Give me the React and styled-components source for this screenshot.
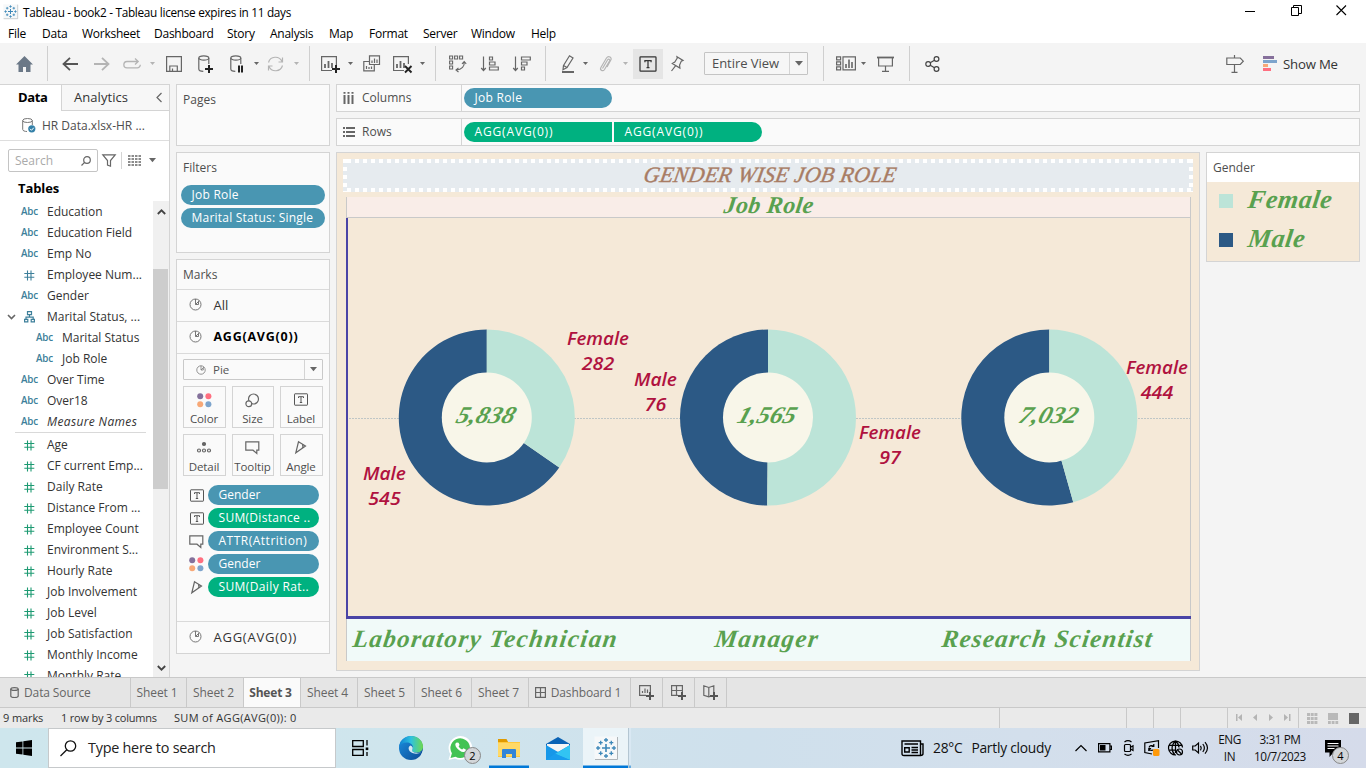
import React from "react";
import styled, { createGlobalStyle, css } from "styled-components";

const C = {
  blue: "#4996b2", green: "#00b180", line: "#d4d4d4", ink: "#333", grey: "#666",
  dim: "#4e4e4e", canvas: "#f5e9d8", script: "#59a14f", navy: "#2c5985", mint: "#bce4d8",
};
const ui = `"Open Sans", "Noto Sans", sans-serif`;
const script = `"Liberation Serif", serif`;

const Global = createGlobalStyle`
  * { box-sizing: border-box; }
  html, body { margin: 0; padding: 0; overflow: hidden; }
  body { width: 1366px; height: 768px; font: 12px/16px ${ui}; color: ${C.ink}; background: #fff; }
  svg { display: block; flex: none; overflow: visible; }
`;

const Window = styled.div`width: 1366px; height: 768px; display: flex; flex-direction: column; overflow: hidden; white-space: nowrap;`;
const TitleBar = styled.header`height: 22px; display: flex; align-items: center; padding: 1px 19px 0 3px; background: #fff; color: #000; letter-spacing: -0.3px;`;
const TitleText = styled.span`margin-left: 5px; flex: 1; font-size: 11.8px;`;
const WindowButtons = styled.div`display: flex; gap: 34.5px; padding-bottom: 3px;`;
const MenuBar = styled.nav`height: 21px; display: flex; align-items: center; padding: 2px 0 0 8px; background: #fff; color: #000; font-size: 12px;`;
const MenuItem = styled.span`width: ${p => p.$w}px; letter-spacing: -0.25px;`;

const Toolbar = styled.div`height: 41px; display: flex; align-items: center; background: #f4f4f4;`;
const Tool = styled.div`width: ${p => p.$w}px; margin-left: ${p => p.$gap || 0}px; display: flex; justify-content: center; flex: none;`;
const Sep = styled.div`width: 1px; height: 35px; background: #cfcfcf; margin-left: ${p => p.$gap}px; flex: none;`;
const Pressed = styled(Tool)`height: 30px; align-items: center; background: #e5e5e5;`;
const FitSelect = styled.div`width: 104px; height: 23px; margin-left: 20px; display: flex; border: 1px solid #c4c4c4; border-radius: 1px; font-size: 13px; line-height: 21px; color: ${C.dim}; padding-left: 7px; letter-spacing: -0.05px; background: #f6f6f6;`;
const SelectArrow = styled.div`margin-left: auto; width: ${p => p.$w}px; border-left: 1px solid ${C.line}; display: flex; align-items: center; justify-content: center;`;
const ShowMe = styled.span`margin-left: 6px; font: 13.2px ${ui}; color: #333; letter-spacing: -0.2px;`;

const Workspace = styled.main`height: 593px; display: flex; background: #f4f4f4;`;
const Sidebar = styled.aside`width: 170px; border-right: 1px solid ${C.line}; border-top: 1px solid ${C.line}; background: #fff; display: flex; flex-direction: column;`;
const SideTabs = styled.div`display: flex; height: 26px;`;
const DataTab = styled.div`width: 61px; font-weight: 700; font-size: 13px; line-height: 25px; color: #000; padding-left: 18px; letter-spacing: -0.35px;`;
const AnalyticsTab = styled.div`flex: 1; border-left: 1px solid ${C.line}; border-bottom: 1px solid ${C.line}; background: #f7f7f7; display: flex; align-items: center; justify-content: space-between; padding: 0 7px 1px 12px; font-size: 13px; letter-spacing: 0.05px;`;
const SourceRow = styled.div`height: 30px; display: flex; align-items: center; padding-left: 22px; gap: 6px; border-bottom: 1px solid #dedede; color: ${C.dim};`;
const SearchRow = styled.div`height: 39px; padding: 8px 12px 8px 8px; display: flex; align-items: center;`;
const SearchBox = styled.div`width: 90px; height: 23px; border: 1px solid #c4c4c4; border-radius: 2px; display: flex; align-items: center; justify-content: space-between; padding: 0 6px; color: #aaa;`;
const SmallRule = styled.div`width: 1px; height: 17px; background: ${C.line}; margin: 0 6px 0 5px;`;
const TablesHeading = styled.h2`margin: 0; height: 21px; padding-left: 18px; font-size: 13px; line-height: 16px; font-weight: 700; color: #000; letter-spacing: -0.1px;`;
const FieldArea = styled.div`height: 476px; display: flex; overflow: hidden;`;
const Fields = styled.div`width: 153px; height: 476px; overflow: hidden;`;
const Field = styled.div`height: 21px; display: flex; align-items: center; color: ${C.ink}; font-style: ${p => p.$italic ? "italic" : "normal"}; padding-left: ${p => p.$child ? 15 : 0}px; letter-spacing: ${p => p.$italic ? 0.36 : 0}px;`;
const Arrow = styled.span`width: 20px; padding-left: 7px; flex: none;`;
const TypeIcon = styled.span`width: 27px; flex: none; font: normal 600 9.8px/12px ${ui}; color: #3d7f9a; letter-spacing: -0.2px; padding-left: ${p => p.$pad || 0}px; padding-top: 1px;`;
const FieldRule = styled.div`height: 1px; margin: 0 7px 1px 15px; background: #d9d9d9;`;
const Scroll = styled.div`width: 16px; background: #f0f0f0; display: flex; flex-direction: column; align-items: center; justify-content: space-between; padding: 8px 0 6px; position: relative;`;
const Thumb = styled.div`position: absolute; top: 68px; left: 0; width: 15px; height: 220px; background: #cdcdcd;`;

const CardColumn = styled.div`width: 154px; margin-left: 6px; display: flex; flex-direction: column; gap: 6px;`;
const Card = styled.section`height: ${p => p.$h}px; border: 1px solid ${C.line}; background: #fafafa; display: flex; flex-direction: column; flex: none;`;
const CardTitle = styled.div`height: ${p => p.$h || 30}px; padding: 7px 0 0 6px; color: ${C.dim}; flex: none;`;
const pill = css`height: 20px; color: #fff; line-height: 19px; padding-left: 11px; background: ${p => p.$green ? C.green : C.blue}; overflow: hidden; flex: none; letter-spacing: ${p => p.$ls || 0}px;`;
const FilterPill = styled.div`${pill} margin: 2px 4px 1px; border-radius: 10px; padding-left: 10.5px;`;
const MarkLayer = styled.div`height: 32px; border-top: 1px solid #dadada; display: flex; align-items: center; padding: 0 0 2px 12px; gap: 11.5px; flex: none; font-size: ${p => p.$bold ? 12.5 : 13}px; font-weight: ${p => p.$bold ? 700 : 400}; color: ${p => p.$bold ? "#000" : C.ink}; letter-spacing: ${p => p.$ls || 0}px;`;
const MarkBody = styled.div`border-top: 1px solid #dadada; padding: 5px 6px; height: 268px; flex: none;`;
const MarkSelect = styled.div`height: 21px; border: 1px solid #c9c9c9; border-radius: 1px; display: flex; align-items: center; padding-left: 12px; gap: 7px; font-size: 11.5px; color: #555; ${SelectArrow} { height: 19px; }`;
const MarkGrid = styled.div`display: grid; grid-template-columns: 43px 42px 43px; column-gap: 6px; row-gap: 6px; margin-top: 6px;`;
const MarkButton = styled.div`height: 42px; border: 1px solid ${C.line}; display: flex; flex-direction: column; align-items: center; justify-content: space-between; padding: 6px 1px 0 0; font-size: 11.5px; line-height: 16px; color: ${C.dim}; letter-spacing: -0.1px;`;
const MarkPills = styled.div`margin-top: 9px; display: flex; flex-direction: column; gap: 3px;`;
const MarkPillRow = styled.div`display: flex; align-items: center; height: 20px;`;
const MarkGlyph = styled.div`width: 26px; display: flex; justify-content: center; padding-left: 1px; margin-right: -1px;`;
const MarkPill = styled.div`${pill} width: 111px; border-radius: 10px; padding-left: 10.5px;`;

const Content = styled.div`width: 1024px; margin-left: 6px; display: flex; flex-direction: column;`;
const Shelf = styled.div`height: 28px; margin-bottom: 6px; border: 1px solid ${C.line}; background: #fafafa; display: flex; align-items: center; color: ${C.dim}; flex: none;`;
const ShelfName = styled.div`width: 125px; height: 26px; border-right: 1px solid ${C.line}; display: flex; align-items: center; padding-left: 6px; gap: 7px; margin-right: 2px;`;
const ShelfPill = styled.div`${pill} width: 148px; margin-right: 2px; border-radius: ${p => p.$radius || "10px"}; padding-left: 10.5px;`;
const Lower = styled.div`display: flex; gap: 6px;`;
const Viz = styled.section`width: 864px; height: 519px; border: 1px solid ${C.line}; background: ${C.canvas}; padding: 6px 6px 0; flex: none;`;
const VizTitle = styled.div`
  height: 33px; margin-bottom: 5px; padding: 4px 3px 0 8px; width: 850px;
  background: repeating-linear-gradient(90deg, transparent 0 4px, #fff 4px 8px) 0 0 / 100% 4px no-repeat,
    repeating-linear-gradient(90deg, transparent 0 4px, #fff 4px 8px) 0 100% / 100% 4px no-repeat,
    repeating-linear-gradient(180deg, #fff 0 4px, transparent 4px 8px) 0 0 / 4px 100% no-repeat,
    repeating-linear-gradient(180deg, #fff 0 4px, transparent 4px 8px) 100% 0 / 4px 100% no-repeat, #e6ebef;
  text-align: center; font: italic 400 22px/24px ${script}; color: #a87c64; letter-spacing: 0.25px; -webkit-text-stroke: 0.4px #a87c64;
`;
const VizTitleText = styled.span`display: inline-block; transform: skewX(-10deg);`;
const Sheet = styled.div`margin-left: 3px; width: 845px; height: 464px; border-right: 1px solid #c9c9c9;`;
const ColumnHeader = styled.div`height: 21px; background: #f9ede8; border-left: 1px solid #c9c9c9; border-bottom: 1px solid #c9c9c9; text-align: center; font: italic 700 24px/16px ${script}; color: ${C.script}; overflow: hidden; letter-spacing: 0.3px;`;
const Plot = styled.div`height: 401px; border-left: 2px solid #4a44a6; border-bottom: 3px solid #4a44a6; margin-right: -1px;`;
const Axis = styled.div`height: 42px; background: #f1faf9; border-left: 1px solid #c9c9c9; display: grid; grid-template-columns: 278px 284px 278px; padding-top: 2px;`;
const Script = styled.span`display: inline-block; transform: skewX(-8deg);`;
const AxisLabel = styled.div`text-align: center; font: italic 700 25px/36px ${script}; color: ${C.script}; letter-spacing: ${p => p.$ls}px;`;
const Legend = styled.section`width: 154px; height: 110px; border: 1px solid ${C.line}; background: ${C.canvas};`;
const LegendTitle = styled.div`height: 29px; background: #fff; padding: 7px 6px; color: ${C.dim};`;
const LegendRow = styled.div`height: 39px; display: flex; align-items: center; padding: 0 0 2px 12px; gap: 15px; font: italic 700 26px/30px ${script}; color: ${C.script}; letter-spacing: 0.6px;`;
const Swatch = styled.i`width: 14px; height: 14px; background: ${p => p.$c};`;
const LegendText = styled(Script)`padding-bottom: 2px;`;

const SheetTabs = styled.div`height: 31px; display: flex; border-top: 1px solid #c9c9c9; border-bottom: 1px solid #c9c9c9; background: #e5e5e5; color: ${C.grey}; flex: none;`;
const SheetTab = styled.div`width: ${p => p.$w}px; display: flex; align-items: center; justify-content: ${p => p.$left ? "flex-start" : "center"}; gap: 5px; padding-left: ${p => p.$left || 0}px; padding-right: ${p => p.$left ? 0 : 3}px; border-right: 1px solid #c9c9c9; background: ${p => p.$active ? "#fafafa" : "transparent"}; font-weight: ${p => p.$active ? 700 : 400}; color: ${p => p.$active ? "#555" : C.grey}; letter-spacing: ${p => p.$active ? -0.2 : -0.12}px;`;
const IconTab = styled(SheetTab)`padding: 0;`;
const StatusBar = styled.div`height: 20px; display: flex; background: #eaeaea; font-size: 11px; line-height: 20px; padding-left: 3px; color: ${C.ink}; flex: none;`;
const StatusText = styled.span`width: ${p => p.$w}px; letter-spacing: ${p => p.$ls || 0}px; flex: none;`;
const StatusCell = styled.div`width: ${p => p.$w}px; border-left: 1px solid #c9c9c9; display: flex; align-items: center; padding-left: ${p => p.$pad || 0}px; gap: ${p => p.$gap || 0}px; flex: none;`;

const Taskbar = styled.footer`height: 40px; display: flex; align-items: center; background: linear-gradient(90deg, #cee6ed 0%, #cfe5ed 30%, #cfe0ec 55%, #d3dfec 75%, #d5dbea 100%); color: #111; flex: none;`;
const StartButton = styled.div`width: 48px; display: flex; justify-content: center;`;
const TaskSearch = styled.div`width: 288px; height: 40px; background: #fff; border: 1px solid #c6c9cb; display: flex; align-items: center; gap: 11px; padding-left: 11px; font-size: 14.4px; letter-spacing: -0.25px; color: #222;`;
const TaskItem = styled.div`width: ${p => p.$w}px; height: 40px; margin-left: ${p => p.$gap || 0}px; display: flex; align-items: center; justify-content: center; position: relative; background: ${p => p.$active ? "#ebf4f8" : "transparent"}; box-shadow: ${p => p.$open ? "inset 0 -2.5px 0 #0078d7" : "none"}; flex: none;`;
const StackEdge = styled.div`width: 3px; height: 40px; background: #d9e8f3; border-left: 1px solid #b4c6d2; box-shadow: inset 0 -2.5px 0 #63a9e0; flex: none;`;
const Badge = styled.span`position: absolute; left: ${p => p.$x}px; top: 19px; width: 17px; height: 17px; border-radius: 50%; border: 1px solid #888; background: #d3d6d9; font-size: 11px; line-height: 15px; text-align: center; color: #000;`;
const Weather = styled.div`display: flex; align-items: center; margin-left: 270px; width: 174px; font-size: 13.8px; letter-spacing: -0.25px; gap: 9px; flex: none;`;
const Clock = styled.div`width: ${p => p.$w}px; text-align: center; font-size: 11.8px; line-height: 17px; letter-spacing: -0.45px; flex: none;`;

const S = ({ w = 18, h = 18, c = "#666", sw = 1.2, children, vb }) => (
  <svg width={w} height={h} viewBox={vb || `0 0 ${w} ${h}`} fill="none" stroke={c} strokeWidth={sw}>{children}</svg>
);
const Caret = ({ c = "#666", w = 5 }) => <svg width={w} height={w * 0.6} viewBox="0 0 10 6"><path d="M0 0h10L5 6z" fill={c} /></svg>;
const Pie = ({ s = 13 }) => <S w={s} h={s} vb="0 0 13 13" c="#777" sw={1}><circle cx="6.5" cy="6.5" r="5.5" /><path d="M6.5 6.5V1M6.5 6.5l3.800-3.800M6.500 6.500h3V3.500" /></S>;
const TBox = ({ w = 14, h = 13, c = "#555" }) => <S w={w} h={h} vb="0 0 14 13" c={c} sw={1}><rect x=".5" y=".8" width="13" height="11.4" rx=".5" /><path d="M4.500 5V3.700h5V5M7 3.700v5.800M5.800 9.500h2.400" /></S>;
const Dots = () => <svg width="15" height="15"><circle cx="3.2" cy="3.2" r="3" fill="#84719b" /><circle cx="11.4" cy="3.2" r="3" fill="#ff6f80" /><circle cx="3.2" cy="11.2" r="3" fill="#f7a877" /><circle cx="11.4" cy="11.2" r="3" fill="#7da4cc" /></svg>;
const Bubble = () => <S w={15} h={13}><path d="M.8.8h13v8.400h-2v3.300L8 9.200H.8z" /></S>;
const Angle = () => <S w={12} h={13}><path d="M3.500.8l7 4.200-9.700 6.800zM7.500 3.400c.8 1.800.6 3.200-.8 4.300" /></S>;
const Hash = ({ c = "#1d9a72" }) => <S w={11} h={11} c={c} sw={1.1}><path d="M3.500.5v10M7 .5v10M.3 3.500h10M.3 7.200h10" /></S>;
const Tree = () => <S w={11} h={12} c="#3d7f9a"><path d="M3.500.6h4v3h-4zM5.500 3.600v2.600M2 8.300V6.200h7.200v2.100M.6 8.300h3.200v2.600H.6zM7.200 8.300h3.200v2.600H7.200z" /></S>;
const Cyl = ({ children, w = 16 }) => <S w={w} h={18}><ellipse cx="5.800" cy="3" rx="5" ry="2.200" /><path d="M.8 3v11c0 1.500 2 2.300 4.500 2.300M10.800 3v6" />{children}</S>;
const Plus = ({ x, y, c = "#222" }) => <path d={`M${x} ${y - 4}v8M${x - 4} ${y}h8`} stroke={c} strokeWidth="2" />;
const Bars = ({ x = 0, y = 0 }) => <path d={`M${x} ${y}v-4M${x + 3.5} ${y}v-7M${x + 7} ${y}v-5`} strokeWidth="1.8" />;
const TableauMark = ({ s = 24 }) => (
  <svg width={s} height={s} viewBox="0 0 24 24">
    <rect x=".5" y=".5" width="23" height="23" fill="#f6f8f9" />
    <path d="M23.500 1v22.500H1" stroke="#aeb4b8" fill="none" />
    <g stroke="#3c87b8" strokeWidth="1.3" fill="none">
      <path d="M12 8v8M8 12h8" strokeWidth="1.6" /><path d="M12 2v4M10 4h4M12 18v4M10 20h4M4 10v4M2.200 12h4M20 10v4M17.800 12h4" />
      <path d="M6.700 4.700v4M4.700 6.700h4M17.300 4.700v4M15.300 6.700h4M6.700 15.300v4M4.700 17.300h4M17.300 15.300v4M15.300 17.300h4" />
    </g>
  </svg>
);

const menus = [["File", 34], ["Data", 40], ["Worksheet", 72], ["Dashboard", 73], ["Story", 43], ["Analysis", 59], ["Map", 40], ["Format", 54], ["Server", 48], ["Window", 60], ["Help", 40]];
const dimensions = [["Education", "abc"], ["Education Field", "abc"], ["Emp No", "abc"], ["Employee Num...", "num"], ["Gender", "abc"], ["Marital Status, ...", "tree"], ["Marital Status", "abc", true], ["Job Role", "abc", true], ["Over Time", "abc"], ["Over18", "abc"], ["Measure Names", "abc", false, true]];
const measures = ["Age", "CF current Emp...", "Daily Rate", "Distance From ...", "Employee Count", "Environment S...", "Hourly Rate", "Job Involvement", "Job Level", "Job Satisfaction", "Monthly Income", "Monthly Rate"];

const FieldRow = ({ name, type, child, italic }) => (
  <Field $child={child} $italic={italic}>
    <Arrow>{type === "tree" && <S w={9} h={6} sw={1.6}><path d="M1 1l3.500 3.500L8 1" /></S>}</Arrow>
    <TypeIcon $pad={type === "abc" ? 1 : 3.5}>{type === "abc" ? "Abc" : type === "tree" ? <Tree /> : <Hash c={type === "num" ? "#3d7f9a" : undefined} />}</TypeIcon>
    {name}
  </Field>
);

const pies = [
  { cx: 138.8, deg: 124.6, total: "5,838", labels: [["Female", "282", 250, 127], ["Male", "545", 36.5, 262]] },
  { cx: 420, deg: 180.5, total: "1,565", labels: [["Male", "76", 307.5, 168], ["Female", "97", 542, 221]] },
  { cx: 701.3, deg: 164.2, total: "7,032", labels: [["Female", "444", 809, 156]] },
];
const widths = { Female: 62, Male: 43 };
const Donut = ({ cx, deg, total, labels }) => {
  const cy = 199.5, r = 88, a = (deg * Math.PI) / 180;
  const x = cx + r * Math.sin(a), y = cy - r * Math.cos(a), large = deg > 180 ? 1 : 0;
  return (
    <g>
      <path d={`M${cx} ${cy}V${cy - r}A${r} ${r} 0 ${1 - large} 0 ${x} ${y}Z`} fill={C.navy} />
      <path d={`M${cx} ${cy}V${cy - r}A${r} ${r} 0 ${large} 1 ${x} ${y}Z`} fill={C.mint} />
      <circle cx={cx} cy={cy} r="45" fill="#f8f6e9" />
      <text transform={`translate(${cx - 3} ${cy + 5.5}) skewX(-18)`} textAnchor="middle" textLength="58" lengthAdjust="spacingAndGlyphs" fontFamily="Liberation Serif" fontStyle="italic" fontWeight="700" fontSize="24" fill={C.script}>{total}</text>
      {labels.map(([name, value, lx, ly]) => (
        <g key={name} fill="#b0123f" fontFamily="Open Sans" fontStyle="italic" fontWeight="600" fontSize="18.5" textAnchor="middle">
          <text x={lx} y={ly} textLength={widths[name]} lengthAdjust="spacingAndGlyphs">{name}</text>
          <text x={lx} y={ly + 25} textLength={value.length * 10.8} lengthAdjust="spacingAndGlyphs">{value}</text>
        </g>
      ))}
    </g>
  );
};

export default function App() {
  return (
    <Window>
      <Global />
      <TitleBar>
        <TableauMark s={15} />
        <TitleText>Tableau - book2 - Tableau license expires in 11 days</TitleText>
        <WindowButtons>
          <S w={11} h={11} c="#000" sw={1}><path d="M0 6.500h10" /></S>
          <S w={11} h={11} c="#000" sw={1}><path d="M.5 2.500h7v8h-7zM2.500 2.500v-2h8v8h-3" /></S>
          <S w={11} h={11} c="#000" sw={1.1}><path d="M.5.500l9.500 9.500M10 .5L.5 10" /></S>
        </WindowButtons>
      </TitleBar>
      <MenuBar>{menus.map(([m, w]) => <MenuItem key={m} $w={w}>{m}</MenuItem>)}</MenuBar>

      <Toolbar>
        <Tool $w={17} $gap={16}><svg width="17" height="16"><path d="M8.500 0L0 8.500h2.500V16H7v-5h3v5h4.500V8.500H17z" fill="#6b7887" /></svg></Tool>
        <Sep $gap={14} />
        <Tool $w={16} $gap={14}><S w={16} h={14} sw={1.8} c="#555"><path d="M16 7H1.500M8 .8L1.500 7 8 13.200" /></S></Tool>
        <Tool $w={16} $gap={16}><S w={16} h={14} sw={1.8} c="#b4b4b4"><path d="M0 7h14.500M8 .8L14.500 7 8 13.200" /></S></Tool>
        <Tool $w={18} $gap={13}><S w={18} h={12} sw={1.3} c="#b4b4b4"><path d="M15 3.500h-11A3 3 0 0 0 4 9.800h10a3 3 0 0 0 3.300-3M12 .5l3.200 3L12 6.500" /></S></Tool>
        <Tool $w={5} $gap={9}><Caret c="#b4b4b4" /></Tool>
        <Tool $w={16} $gap={11}><S w={16} h={16}><path d="M.6.6h14.800v14.800H.6zM3.800 15v-5h7.500v5M6.500 15v-2.500" /></S></Tool>
        <Tool $w={16} $gap={16}><Cyl><Plus x={11} y={14} /></Cyl></Tool>
        <Tool $w={14} $gap={16}><Cyl w={14}><path d="M9 10.500v7M12 10.500v7" stroke="#222" strokeWidth="2" /></Cyl></Tool>
        <Tool $w={5} $gap={10}><Caret /></Tool>
        <Tool $w={17} $gap={8}><S w={17} h={16} c="#b4b4b4"><path d="M1.500 6.500A7.200 7.200 0 0 1 15 5.500M15.500 9.500A7.200 7.200 0 0 1 2 10.500M15.500 1.500V6H11.500M1.500 14.500V10H5.500" /></S></Tool>
        <Tool $w={5} $gap={10}><Caret c="#b4b4b4" /></Tool>
        <Sep $gap={10} />
        <Tool $w={20} $gap={11}><S w={20} h={18}><path d="M11 15.500H.6V1.600h14.800V10" /><Bars x={4} y={13} /><Plus x={15} y={14} /></S></Tool>
        <Tool $w={5} $gap={7}><Caret /></Tool>
        <Tool $w={17} $gap={10}><S w={17} h={17}><path d="M6.500.8h10v8.700h-10zM6 6.500H.8v9.300h10.500V9.800" /><path d="M9 8V5.500M11.500 8V3.500M14 8V4.500M3.500 14v-3M6 14v-2M8.500 14v-2.500" /></S></Tool>
        <Tool $w={20} $gap={13}><S w={20} h={18}><path d="M11 15.500H.6V1.600h14.800V9" /><Bars x={4} y={13} /><path d="M12 11l6.500 6.500M18.500 11L12 17.500" stroke="#222" strokeWidth="1.900" /></S></Tool>
        <Tool $w={5} $gap={7}><Caret /></Tool>
        <Sep $gap={10} />
        <Tool $w={17} $gap={13}><S w={17} h={17} sw={1.100}><path d="M.6 1h3v3h-3zM5.600 1h3v3h-3zM10.600 1h3v3h-3zM.6 6h3v3h-3zM.6 11h3v3h-3zM15.200 7c.5 4-2.200 7.500-8 8M13 8.800L15.200 6.500l2 2.300M9.500 12.800L7 15l2.500 2" /></S></Tool>
        <Tool $w={18} $gap={15}><S w={18} h={16}><path d="M2.500.5v14M.2 12l2.300 2.500L4.800 12M8.500 1h3v3h-3zM8.500 6h5.500v3H8.500zM8.500 11h8.800v3H8.500z" /></S></Tool>
        <Tool $w={18} $gap={14}><S w={18} h={16}><path d="M2.500.5v14M.2 12l2.300 2.500L4.800 12M8.500 1h8.800v3H8.500zM8.500 6h5.500v3H8.500zM8.500 11h3v3h-3z" /></S></Tool>
        <Sep $gap={14} />
        <Tool $w={14} $gap={15}><S w={14} h={18}><path d="M2.500 10.500L8.500.8l3.500 2.200-6 9.500-4 2.200z" /><path d="M2.500 10.500L6 12.500" /><path d="M1 17h12" strokeWidth="2" /></S></Tool>
        <Tool $w={5} $gap={8}><Caret /></Tool>
        <Tool $w={13} $gap={11}><S w={13} h={16} c="#b4b4b4"><path d="M3.500 12.500L8.500 4c1-1.500 2.800-.5 2 1L5.500 13.500c-1.600 2.500-5 .5-3.600-2L7.500 2c2-3 6-.5 4.200 2.300L8 11" /></S></Tool>
        <Tool $w={5} $gap={11}><Caret c="#b4b4b4" /></Tool>
        <Pressed $w={30} $gap={5}><TBox w={18} h={16} c="#333" /></Pressed>
        <Tool $w={14} $gap={7}><S w={14} h={15}><path d="M7 .8l6 3.600-1.700.7-1.700 4 .3 3-7.600-4.500 2.500-1.600 2.500-4zM5.500 9.800L1.500 15" /></S></Tool>
        <FitSelect>Entire View<SelectArrow $w={18}><Caret w={8} /></SelectArrow></FitSelect>
        <Sep $gap={15} />
        <Tool $w={20} $gap={12}><S w={20} h={15}><path d="M.6.8h4v3h-4zM.6 5.800h4v3h-4zM.6 10.800h4v3h-4zM7 .8h12.400v13H7z" /><path d="M10 12V8M13 12V3.500M16 12V6" strokeWidth="1.600" /></S></Tool>
        <Tool $w={5} $gap={5}><Caret /></Tool>
        <Tool $w={17} $gap={11}><S w={17} h={16}><path d="M0 1.500h17" strokeWidth="1.800" /><path d="M1.600 2v8h13.800V2M8.500 10v5M5 15.300h7" /></S></Tool>
        <Sep $gap={15} />
        <Tool $w={15} $gap={15}><S w={15} h={16} c="#444"><circle cx="3.200" cy="8" r="2.400" /><circle cx="11.500" cy="3" r="2.400" /><circle cx="11.500" cy="13" r="2.400" /><path d="M5.200 6.800l4.300-2.600M5.200 9.200l4.300 2.600" /></S></Tool>
        <Tool $w={18} $gap={286}><S w={18} h={18}><path d="M.8 3h13.500l3 3.200-3 3.300H.8zM8.500 3V0M8.500 9.500v7.500M5.500 17.400h6" /></S></Tool>
        <Tool $w={14} $gap={19}><svg width="14" height="15"><path d="M0 0h11v3H0z" fill="#86709b" /><path d="M0 4h14v3H0z" fill="#7da4cc" /><path d="M0 8h5v3H0z" fill="#f7a877" /><path d="M0 12h8v3H0z" fill="#ff6f80" /></svg></Tool>
        <ShowMe>Show Me</ShowMe>
      </Toolbar>

      <Workspace>
        <Sidebar>
          <SideTabs><DataTab>Data</DataTab><AnalyticsTab>Analytics<S w={6} h={11}><path d="M5.500 1L1 5.500 5.500 10" /></S></AnalyticsTab></SideTabs>
          <SourceRow><svg width="14" height="15" fill="none" stroke="#777"><ellipse cx="5.500" cy="2.500" rx="4.800" ry="2" /><path d="M.7 2.500v9c0 1.200 2 2 4.300 2M10.300 2.500V7" /><circle cx="9.800" cy="10.800" r="3.600" fill="#3380a8" stroke="none" /><path d="M8 10.800l1.500 1.500 2.300-2.600" stroke="#fff" /></svg>HR Data.xlsx-HR ...</SourceRow>
          <SearchRow>
            <SearchBox>Search<S w={10} h={10}><circle cx="6" cy="4" r="3.300" /><path d="M3.600 6.400L.5 9.500" /></S></SearchBox>
            <Tool $w={14} $gap={4}><S w={14} h={13}><path d="M.8.8h12.400L8.500 6.500v5.700l-3-1.200V6.500z" /></S></Tool>
            <SmallRule />
            <S w={13} h={11} sw={1.400}><path d="M0 1h13M0 4h13M0 7h13M0 10h13" strokeDasharray="2.500 1" /></S>
            <Tool $w={7} $gap={8}><Caret w={7} /></Tool>
          </SearchRow>
          <TablesHeading>Tables</TablesHeading>
          <FieldArea>
            <Fields>
              {dimensions.map(([n, t, child, it]) => <FieldRow key={n} name={n} type={t} child={child} italic={it} />)}
              <FieldRule />
              {measures.map(n => <FieldRow key={n} name={n} type="hash" />)}
            </Fields>
            <Scroll>
              <S w={9} h={6} sw={1.800} c="#444"><path d="M.8 5l3.700-3.700L8.200 5" /></S>
              <Thumb />
              <S w={9} h={6} sw={1.800} c="#444"><path d="M.8 1l3.700 3.700L8.200 1" /></S>
            </Scroll>
          </FieldArea>
        </Sidebar>

        <CardColumn>
          <Card $h={62}><CardTitle>Pages</CardTitle></Card>
          <Card $h={101}><CardTitle>Filters</CardTitle><FilterPill $ls={0.25}>Job Role</FilterPill><FilterPill $ls={0.22}>Marital Status: Single</FilterPill></Card>
          <Card $h={395}>
            <CardTitle $h={29}>Marks</CardTitle>
            <MarkLayer><Pie />All</MarkLayer>
            <MarkLayer $bold $ls={0.75}><Pie />AGG(AVG(0))</MarkLayer>
            <MarkBody>
              <MarkSelect><Pie s={10} />Pie<SelectArrow $w={18}><Caret w={7} /></SelectArrow></MarkSelect>
              <MarkGrid>
                <MarkButton><Dots />Color</MarkButton>
                <MarkButton><S w={15} h={15}><circle cx="8.500" cy="6" r="5" /><circle cx="3.800" cy="10.800" r="2.900" fill="#fafafa" /></S>Size</MarkButton>
                <MarkButton><TBox />Label</MarkButton>
                <MarkButton><S w={14} h={13}><circle cx="7" cy="3" r="1.500" fill="#666" /><circle cx="2" cy="9.500" r="1.500" /><circle cx="7" cy="9.500" r="1.500" /><circle cx="12" cy="9.500" r="1.500" /></S>Detail</MarkButton>
                <MarkButton><Bubble />Tooltip</MarkButton>
                <MarkButton><Angle />Angle</MarkButton>
              </MarkGrid>
              <MarkPills>
                <MarkPillRow><MarkGlyph><TBox /></MarkGlyph><MarkPill>Gender</MarkPill></MarkPillRow>
                <MarkPillRow><MarkGlyph><TBox /></MarkGlyph><MarkPill $green $ls={0.3}>SUM(Distance ..</MarkPill></MarkPillRow>
                <MarkPillRow><MarkGlyph><Bubble /></MarkGlyph><MarkPill $ls={0.5}>ATTR(Attrition)</MarkPill></MarkPillRow>
                <MarkPillRow><MarkGlyph><Dots /></MarkGlyph><MarkPill>Gender</MarkPill></MarkPillRow>
                <MarkPillRow><MarkGlyph><Angle /></MarkGlyph><MarkPill $green $ls={0.38}>SUM(Daily Rat..</MarkPill></MarkPillRow>
              </MarkPills>
            </MarkBody>
            <MarkLayer $ls={0.75}><Pie />AGG(AVG(0))</MarkLayer>
          </Card>
        </CardColumn>

        <Content>
          <Shelf><ShelfName><S w={12} h={12} sw={2}><path d="M1.500 3v9M5.500 3v9M9.500 3v9M1.500 0v1.800M5.500 0v1.800M9.500 0v1.800" /></S><span>Columns</span></ShelfName><ShelfPill $ls={0.3}>Job Role</ShelfPill></Shelf>
          <Shelf><ShelfName><S w={12} h={10} sw={2}><path d="M3 1h9M3 5h9M3 9h9M0 1h2M0 5h2M0 9h2" /></S><span>Rows</span></ShelfName><ShelfPill $green $ls={0.85} $radius="10px 0 0 10px">AGG(AVG(0))</ShelfPill><ShelfPill $green $ls={0.85} $radius="0 10px 10px 0">AGG(AVG(0))</ShelfPill></Shelf>
          <Lower>
            <Viz>
              <VizTitle><VizTitleText>GENDER WISE JOB ROLE</VizTitleText></VizTitle>
              <Sheet>
                <ColumnHeader><Script>Job Role</Script></ColumnHeader>
                <Plot>
                  <svg width="843" height="398">
                    <path d="M1 200.500H842" stroke="#bfc6c6" strokeDasharray="2 1" />
                    {pies.map(p => <Donut key={p.total} {...p} />)}
                  </svg>
                </Plot>
                <Axis><AxisLabel $ls={1.4}><Script>Laboratory Technician</Script></AxisLabel><AxisLabel $ls={1.4}><Script>Manager</Script></AxisLabel><AxisLabel $ls={1.2}><Script>Research Scientist</Script></AxisLabel></Axis>
              </Sheet>
            </Viz>
            <Legend>
              <LegendTitle>Gender</LegendTitle>
              <LegendRow><Swatch $c={C.mint} /><LegendText>Female</LegendText></LegendRow>
              <LegendRow><Swatch $c={C.navy} /><LegendText>Male</LegendText></LegendRow>
            </Legend>
          </Lower>
        </Content>
      </Workspace>

      <SheetTabs>
        <SheetTab $w={131} $left={10}><S w={9} h={11}><ellipse cx="4.500" cy="2" rx="3.700" ry="1.400" /><path d="M.8 2v7c0 2 7.400 2 7.400 0V2" /></S>Data Source</SheetTab>
        {[1, 2, 3, 4, 5, 6, 7].map(n => <SheetTab key={n} $w={n === 1 ? 56 : 57} $active={n === 3}>Sheet {n}</SheetTab>)}
        <SheetTab $w={102}><S w={11} h={11}><path d="M.6.6h9.800v9.800H.6zM5.500.6v9.800M.6 5.500h9.800" /></S>Dashboard 1</SheetTab>
        <IconTab $w={32}><S w={15} h={15}><path d="M7 10.400H.6V.6h10.800V7M3.500 8V6M6 8V3.500M8.500 8V4.500" /><Plus x={11} y={11} c="#555" /></S></IconTab>
        <IconTab $w={32}><S w={15} h={15}><path d="M7 10.400H.6V.6h10.800V7M5.500.6v9.800M.6 5.500h10.800" /><Plus x={11} y={11} c="#555" /></S></IconTab>
        <IconTab $w={32}><S w={15} h={15}><path d="M5.800 2.500L.8.800v9.400l5 1.700 2-.7M5.800 2.500v9.400M5.800 2.500l5-1.700V7" /><Plus x={11} y={11} c="#555" /></S></IconTab>
      </SheetTabs>
      <StatusBar>
        <StatusText $w={58} $ls={-0.1}>9 marks</StatusText><StatusText $w={113} $ls={-0.2}>1 row by 3 columns</StatusText><StatusText $w={825} $ls={0.33}>SUM of AGG(AVG(0)): 0</StatusText>
        <StatusCell $w={127} /><StatusCell $w={27} /><StatusCell $w={27} />
        <StatusCell $w={47} />
        <StatusCell $w={71} $pad={8}>
          <svg width="55" height="8" fill="#b4b4b4"><path d="M0 0h1.500v7H0zM6 0v7L2 3.500zM21 0v7l-4-3.500zM33 0v7l4-3.500zM48 0v7l4-3.500zM53 0h1.500v7H53z" /></svg>
        </StatusCell>
        <StatusCell $w={68} $pad={8} $gap={11}>
          <svg width="10" height="11" fill="#b9b9b9"><path d="M0 0h3v3H0zM3.700 0h3v3h-3zM7.400 0h3v3h-3zM0 4h3v3H0zM3.700 4h3v3h-3zM7.400 4h3v3h-3zM0 8h3v3H0zM3.700 8h3v3h-3zM7.400 8h3v3h-3z" /></svg>
          <svg width="10" height="11" fill="#b9b9b9"><path d="M0 0h10v7H0zM0 8h2.800v3H0zM3.700 8h2.800v3H3.700zM7.400 8h2.800v3H7.400z" /></svg>
          <svg width="10" height="11"><path d="M0 0h10v11H0z" fill="#666" /></svg>
        </StatusCell>
      </StatusBar>

      <Taskbar>
        <StartButton><svg width="16" height="16"><path d="M0 2.300L6.500 1.400V7.600H0zM7.300 1.300L16 0v7.600H7.300zM0 8.400h6.500v6.200L0 13.700zM7.300 8.400H16V16l-8.700-1.300z" /></svg></StartButton>
        <TaskSearch><S w={17} h={17} c="#111" sw={1.300}><circle cx="10.500" cy="6" r="5.200" /><path d="M6.800 9.800L.5 16" /></S>Type here to search</TaskSearch>
        <TaskItem $w={48}><S w={17} h={16} c="#000" sw={1.300}><path d="M.7.700h10.600v5.800H.7zM.7 9.500h10.600v5.800H.7zM15 0v5.500M15 12v4" /><path d="M13.700 7.500h2.600v2.600h-2.600z" fill="#000" stroke="none" /></S></TaskItem>
        <TaskItem $w={48} $gap={3}>
          <svg width="24" height="24" viewBox="0 0 24 24"><defs><linearGradient id="eg" x1="0" x2="1"><stop offset="0" stopColor="#0e7fd2" /><stop offset=".5" stopColor="#2fc2df" /><stop offset="1" stopColor="#6fd94c" /></linearGradient><linearGradient id="eb" x1="0" y1="0" x2="1" y2="1"><stop offset="0" stopColor="#1b8fe0" /><stop offset="1" stopColor="#0c4a94" /></linearGradient></defs>
            <circle cx="12" cy="12" r="12" fill="url(#eb)" /><path d="M0 11C1 4 6 0 12 0c7 0 12 5 12 10.500 0 4-3 6-6.500 6-3 0-4.500-1-4.500-2 0-.8 1-1.200 1-3C14 9 11.500 6.500 8 6.500 4 6.500 1 8.500 0 11z" fill="url(#eg)" /><path d="M11.500 9.500c-2.500 1-2.500 4.500.2 6.500 3 2.300 7.500 2 10.300.5-1 .3-3 .5-4.800.3-3-.3-4.500-1.500-4-2.800.8-1.500 1-3.500-1.700-4.500z" fill="#d5e9f1" /><path d="M24 14.500l-2 4.500 2 .5z" fill="#cfe5ed" /></svg>
        </TaskItem>
        <TaskItem $w={48} $gap={1}>
          <svg width="25" height="24" viewBox="0 0 24 24"><path d="M0 24l1.800-6A11.800 11.800 0 1 1 6.500 22.400z" fill="#fff" /><path d="M2 22l1.400-4.700A9.800 9.800 0 1 1 7 20.700z" fill="#43c354" /><path d="M8.300 6.500c-2 .7-2 3 0 5.600 2.300 3 5.700 4.700 7.700 3.600 1.500-.8 1.600-1.800 1.200-2.300l-2.200-1.100-1.300 1.300c-1.500-.5-3-1.800-3.600-3.300l1-1.300-1-2.300z" fill="#fff" /></svg>
          <Badge $x={28}>2</Badge>
        </TaskItem>
        <TaskItem $w={40} $gap={5} $open><svg width="22" height="19"><path d="M0 1h8.500l1.500 2H22v15H0z" fill="#ffc83d" /><path d="M0 0h8.500l1.500 3H0z" fill="#e09a00" /><path d="M0 4h22v13H0z" fill="#ffd967" /><path d="M4 19v-8q0-1 1-1h12q1 0 1 1v8h-4v-4H8v4z" fill="#3285d8" /></svg></TaskItem>
        <TaskItem $w={48} $gap={5}><svg width="24" height="23"><path d="M0 7L12 0l12 7v2H0z" fill="#0a62b4" /><path d="M1 7h22v7H1z" fill="#f5f5f5" /><path d="M0 8l12 7 12-7v15H0z" fill="#1697e8" /><path d="M24 8L9 17l15 6z" fill="#32c4f2" /><path d="M0 23l9-6.500L24 23z" fill="#189ced" /></svg></TaskItem>
        <TaskItem $w={45} $gap={1} $active $open><TableauMark s={24} /></TaskItem>
        <StackEdge />
        <Weather><S w={23} h={17} c="#000" sw={1.400}><path d="M1 1h18.500v14.500H3c-1.500 0-2-.5-2-2zM19.500 4H22v9.500c0 1.500-.8 2-2.500 2M3.500 4H17M10.500 7.500H17M10.500 10H17M10.500 12.500H17M3.700 7.700h4.500V12H3.700z" /></S><span>28°C</span><span>Partly cloudy</span></Weather>
        <Tool $w={12}><S w={12} h={8} c="#000"><path d="M.5 7L6 1.500 11.500 7" /></S></Tool>
        <Tool $w={14} $gap={11}><svg width="14" height="10"><path d="M.6.6h11.300v8.300H.6zM12 3h1.400v3.500H12" fill="none" stroke="#000" strokeWidth="1.200" /><path d="M2 2h5.500v5.500H2z" /></svg></Tool>
        <Tool $w={12} $gap={11}><S w={12} h={16} c="#000"><rect x="1.500" y="4.500" width="6" height="7" rx="1" /><path d="M7.500 7.200l2.500-1.500v4.800L7.500 9M1.500 2c2-1.500 5-1.500 7 0M1.500 14c2 1.500 5 1.500 7 0" /></S></Tool>
        <Tool $w={15} $gap={9}><svg width="16" height="16" fill="none" stroke="#000" strokeWidth="1.200"><path d="M8 14L.8 12.500V3L14.500.7V8M5 7.500a3 3 0 0 1 4.500-1.500M9.800 4v2.500H7.500M4.800 11V8.500h2.300M4.900 8.700a3 3 0 0 0 4.500 1" /><rect x="9" y="9" width="6.500" height="7" rx="1.500" fill="#ff9a0a" stroke="none" /></svg></Tool>
        <Tool $w={16} $gap={9}><S w={16} h={16} c="#000"><path d="M8 15A7 7 0 1 1 14.500 7.500M7.500 1C3 5 3 11 7 15M7.500 1C10 3 11 5 11 7.500M1 5.300h13M1 10.200h6.500M7.500 1v12" /><circle cx="11.500" cy="12" r="3" /><path d="M9.500 10l4 4" /></S></Tool>
        <Tool $w={16} $gap={8}><S w={16} h={14} c="#000"><path d="M.7 5v4h2.500L6.500 12V2L3.200 5zM8.500 4.800c1 1.500 1 3 0 4.500M10.800 3c2 2.500 2 5.500 0 8M13 1.200c3 3.500 3 8 0 11.500" /></S></Tool>
        <Clock $w={43}>ENG<br />IN</Clock>
        <Clock $w={58}>3:31 PM<br />10/7/2023</Clock>
        <TaskItem $w={46} $gap={1}><svg width="16" height="17"><path d="M0 0h16v12.500H8.500L4.500 17v-4.500H0z" /><path d="M2.500 3.500h11M2.500 6h11M2.500 8.500h7" stroke="#fff" /></svg><Badge $x={22}>4</Badge></TaskItem>
      </Taskbar>
    </Window>
  );
}
